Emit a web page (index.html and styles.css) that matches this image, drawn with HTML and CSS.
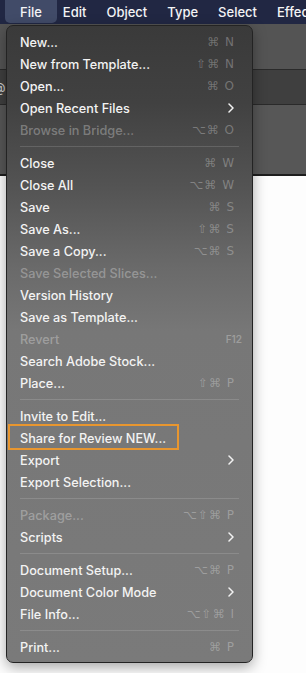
FILE: index.html
```html
<!DOCTYPE html>
<html lang="en-us">

<head>
<title>File Menu</title>
<meta charset="utf-8" />
<meta name="viewport" content="width=device-width, initial-scale=1.0">

<link rel="stylesheet" href="styles.css">
</head>

<body>
<div class="menubar">
  <span class="mb-item active">File</span>
  <span class="mb-item">Edit</span>
  <span class="mb-item">Object</span>
  <span class="mb-item">Type</span>
  <span class="mb-item">Select</span>
  <span class="mb-item">Effect</span>
</div>

<!-- app window behind the menu -->
<div class="backdrop">
  <div class="band band-top"></div>
  <div class="band band-tabs"><span class="at">@</span></div>
  <div class="band band-ctrl"></div>
  <div class="canvas"></div>
</div>

<div class="menu">
  <div class="row"><span class="label">New...</span><span class="keys">⌘ N</span></div>
  <div class="row"><span class="label">New from Template...</span><span class="keys">⇧⌘ N</span></div>
  <div class="row"><span class="label">Open...</span><span class="keys">⌘ O</span></div>
  <div class="row"><span class="label">Open Recent Files</span><svg class="chev" width="6" height="10" viewBox="0 0 6 10"><path d="M1 1l4 4-4 4" fill="none" stroke="#f2f2f2" stroke-width="1.5" stroke-linecap="round" stroke-linejoin="round"/></svg></div>
  <div class="row disabled"><span class="label">Browse in Bridge...</span><span class="keys">⌥⌘ O</span></div>
  <div class="sep"></div>
  <div class="row"><span class="label">Close</span><span class="keys">⌘ W</span></div>
  <div class="row"><span class="label">Close All</span><span class="keys">⌥⌘ W</span></div>
  <div class="row"><span class="label">Save</span><span class="keys">⌘ S</span></div>
  <div class="row"><span class="label">Save As...</span><span class="keys">⇧⌘ S</span></div>
  <div class="row"><span class="label">Save a Copy...</span><span class="keys">⌥⌘ S</span></div>
  <div class="row disabled"><span class="label">Save Selected Slices...</span></div>
  <div class="row"><span class="label">Version History</span></div>
  <div class="row"><span class="label">Save as Template...</span></div>
  <div class="row disabled"><span class="label">Revert</span><span class="keys fkey">F12</span></div>
  <div class="row"><span class="label">Search Adobe Stock...</span></div>
  <div class="row"><span class="label">Place...</span><span class="keys">⇧⌘ P</span></div>
  <div class="sep"></div>
  <div class="row"><span class="label">Invite to Edit...</span></div>
  <div class="row marked"><span class="label">Share for Review NEW...</span></div>
  <div class="row"><span class="label">Export</span><svg class="chev" width="6" height="10" viewBox="0 0 6 10"><path d="M1 1l4 4-4 4" fill="none" stroke="#f2f2f2" stroke-width="1.5" stroke-linecap="round" stroke-linejoin="round"/></svg></div>
  <div class="row"><span class="label">Export Selection...</span></div>
  <div class="sep"></div>
  <div class="row disabled"><span class="label">Package...</span><span class="keys">⌥⇧⌘ P</span></div>
  <div class="row"><span class="label">Scripts</span><svg class="chev" width="6" height="10" viewBox="0 0 6 10"><path d="M1 1l4 4-4 4" fill="none" stroke="#f2f2f2" stroke-width="1.5" stroke-linecap="round" stroke-linejoin="round"/></svg></div>
  <div class="sep"></div>
  <div class="row"><span class="label">Document Setup...</span><span class="keys">⌥⌘ P</span></div>
  <div class="row"><span class="label">Document Color Mode</span><svg class="chev" width="6" height="10" viewBox="0 0 6 10"><path d="M1 1l4 4-4 4" fill="none" stroke="#f2f2f2" stroke-width="1.5" stroke-linecap="round" stroke-linejoin="round"/></svg></div>
  <div class="row"><span class="label">File Info...</span><span class="keys">⌥⇧⌘ I</span></div>
  <div class="sep"></div>
  <div class="row"><span class="label">Print...</span><span class="keys">⌘ P</span></div>
</div>
</body>

</html>
```

FILE: styles.css
```css
body {
  margin: 0;
  background-color: white;
  font-family: Inter, "Noto Sans", sans-serif;
  overflow: hidden;
}

.menubar {
  display: flex;
  height: 24px;
  align-items: stretch;
  padding-left: 5px;
  background-color: #212743;
  white-space: nowrap;
  overflow: hidden;
}

.mb-item {
  display: flex;
  align-items: center;
  padding: 0 10px;
  color: #f4f4f6;
  font-size: 13px;
  font-weight: 500;
}

.mb-item.active {
  padding: 0 15px;
  margin-right: -4px;
  height: 23px;
  background-color: #414b68;
  border-radius: 0 0 5px 5px;
}

.band {
  border-bottom: 1px solid #2a2a2a;
}

.band-top {
  height: 45px;
  background-color: #545454;
}

.band-tabs {
  height: 34px;
  background-color: #3f3f3f;
  color: #cfcfcf;
  font-size: 13px;
  line-height: 34px;
}

.at {
  margin-left: -7px;
}

.band-ctrl {
  height: 69px;
  background-color: #575757;
  border-bottom: 2px solid #1e1e1e;
}

.canvas {
  height: 500px;
  background-color: #fdfdfd;
}

.menu {
  position: absolute;
  left: 6px;
  top: 25px;
  width: 245px;
  padding: 5px 0 4px;
  border: 1px solid #232323;
  border-radius: 7px;
  background: linear-gradient(#3a3a3a 0%, #414141 12%, #535353 25%, #6a6a6a 38%, #777 48%, #7a7a7a 100%);
  box-shadow: 0 4px 14px rgba(0, 0, 0, 0.35);
}

.row {
  position: relative;
  display: flex;
  align-items: center;
  justify-content: space-between;
  height: 22px;
  padding: 0 17px 0 13px;
  color: #f3f3f3;
  font-size: 12.7px;
  font-weight: 500;
  white-space: nowrap;
}

.row.disabled {
  color: rgba(255, 255, 255, 0.3);
}

.keys {
  font-family: "DejaVu Sans", sans-serif;
  font-size: 12px;
  letter-spacing: 1px;
  color: rgba(255, 255, 255, 0.28);
}

.fkey {
  margin-right: -7px;
  font-family: Inter, sans-serif;
  font-size: 10px;
  font-weight: 600;
  letter-spacing: 0;
}

.chev {
  margin-right: 1px;
}

.marked::after {
  content: "";
  position: absolute;
  left: 1px;
  top: -3px;
  width: 167px;
  height: 22px;
  border: 2px solid #e8962f;
}

.sep {
  height: 1px;
  margin: 5px 13px 5px 13px;
  background-color: rgba(255, 255, 255, 0.14);
}
```
